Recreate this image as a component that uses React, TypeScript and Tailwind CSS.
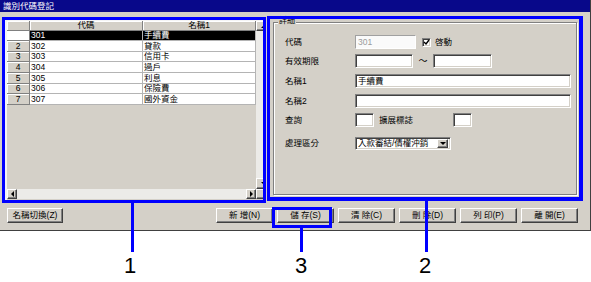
import React from "react";

const raised =
  "bg-[#d4d0c8] border border-t-white border-l-white border-r-[#404040] border-b-[#404040] shadow-[inset_-1px_-1px_0_#808080]";
const sunken =
  "bg-white border border-t-[#808080] border-l-[#808080] border-r-white border-b-white shadow-[inset_1px_1px_0_#404040,inset_-1px_-1px_0_#d4d0c8]";
const hdr =
  "bg-[#d4d0c8] border-r border-b border-[#808080] shadow-[inset_1px_1px_0_#ffffff] flex items-center justify-center";

const rows: [string, string, string][] = [
  ["301", "手續費", "h-[10px]"],
  ["302", "貸款", "h-[11px]"],
  ["303", "信用卡", "h-[10px]"],
  ["304", "過戶", "h-[11px]"],
  ["305", "利息", "h-[11px]"],
  ["306", "保險費", "h-[10px]"],
  ["307", "國外資金", "h-[11px]"],
];

function Tri({ dir }: { dir: "l" | "r" | "u" | "d" }) {
  const pts =
    dir === "l"
      ? "3,0 3,6 0,3"
      : dir === "r"
      ? "0,0 0,6 3,3"
      : dir === "u"
      ? "0,3 6,3 3,0"
      : "0,0 6,0 3,3";
  const w = dir === "l" || dir === "r" ? 3 : 6;
  const h = dir === "l" || dir === "r" ? 6 : 3;
  return (
    <svg width={w} height={h} viewBox={`0 0 ${w} ${h}`}>
      <polygon points={pts} fill="#000" />
    </svg>
  );
}

function Btn({ label, w }: { label: string; w: string }) {
  return (
    <div className={`${raised} ${w} h-[15px] flex items-center justify-center text-[8.5px] leading-none text-black whitespace-pre`}>
      {label}
    </div>
  );
}

function Label({ text, w = "w-[70px]" }: { text: string; w?: string }) {
  return <div className={`${w} shrink-0 text-[8.5px] leading-none text-black`}>{text}</div>;
}

export default function App() {
  return (
    <div className="relative w-[591px] h-[282px] bg-white overflow-hidden font-['Liberation_Sans','Noto_Sans_CJK_TC',sans-serif]">
      {/* Window */}
      <div className="w-[591px] h-[231px] bg-[#d4d0c8] border-r border-b border-[#404040] flex flex-col">
        <div className="h-[12px] bg-[#08088a] text-white text-[8.5px] leading-[12px] pl-[3px]">識別代碼登記</div>

        <div className="flex pl-[5px] pt-[7px]">
          {/* Grid */}
          <div className="w-[258px] h-[182px] border-l-2 border-t-2 border-[#f4f4f4] overflow-hidden flex shrink-0">
            <div className="w-[249px] shrink-0 flex flex-col pb-[2px]">
              <div className="flex h-[10px] text-[8.5px] leading-none">
                <div className={`${hdr} w-[23px]`}></div>
                <div className={`${hdr} w-[113px]`}>代碼</div>
                <div className={`${hdr} w-[113px]`}>名稱1</div>
              </div>
              {rows.map(([code, name, h], i) => {
                const sel = i === 0;
                return (
                  <div key={code} className={`flex ${h} text-[8.5px] leading-none`}>
                    <div
                      className={
                        sel
                          ? "w-[23px] bg-white border-r border-b border-[#808080]"
                          : `${hdr} w-[23px]`
                      }
                    >
                      {sel ? "" : String(i + 1)}
                    </div>
                    <div
                      className={`w-[113px] border-r border-b border-[#b4b4b4] flex items-center pl-[1px] ${
                        sel ? "bg-black text-white" : "bg-white text-black"
                      }`}
                    >
                      {code}
                    </div>
                    <div
                      className={`w-[113px] border-r border-b border-[#b4b4b4] flex items-center pl-[1px] ${
                        sel ? "bg-black text-white" : "bg-white text-black"
                      }`}
                    >
                      {name}
                    </div>
                  </div>
                );
              })}
              <div className="flex-1 bg-[#d4d0c8]"></div>
              <div className="h-[10px] flex">
                <div className={`${raised} w-[10px] flex items-center justify-center`}>
                  <Tri dir="l" />
                </div>
                <div className="flex-1 bg-[#ecebe8]"></div>
                <div className={`${raised} w-[10px] flex items-center justify-center`}>
                  <Tri dir="r" />
                </div>
              </div>
            </div>
            <div className="w-[16px] shrink-0 flex flex-col pb-[2px]">
              <div className={`${raised} h-[10px] flex items-center justify-center`}>
                <Tri dir="u" />
              </div>
              <div className="flex-1 bg-[#ecebe8]"></div>
              <div className={`${raised} h-[11px] flex items-center justify-center`}>
                <Tri dir="d" />
              </div>
              <div className={`${raised} h-[10px]`}></div>
            </div>
          </div>

          {/* Detail group box */}
          <div className="relative ml-[10px] mt-[3px] w-[304px] h-[173px] border border-[#808080] shadow-[inset_1px_1px_0_#ffffff,1px_1px_0_#ffffff] shrink-0">
            <div className="absolute left-[4px] top-[-6px] bg-[#d4d0c8] px-[1px] text-[8px] leading-none text-black">詳細</div>
            <div className="flex flex-col pl-[11px] pt-[12px]">
              <div className="flex items-center h-[14px]">
                <Label text="代碼" />
                <div className="w-[61px] h-[14px] bg-[#fafafa] border border-t-[#a0a0a0] border-l-[#a0a0a0] border-r-white border-b-white flex items-center pl-[2px] text-[8.5px] leading-none text-[#9a9a9a]">
                  301
                </div>
                <div className={`${sunken} ml-[6px] w-[9px] h-[9px] flex items-center justify-center`}>
                  <svg width="7" height="7" viewBox="0 0 7 7">
                    <polyline points="1,3 3,5 6,1" fill="none" stroke="#000" strokeWidth="1.4" />
                  </svg>
                </div>
                <div className="ml-[4px] text-[8.5px] leading-none text-black">啓動</div>
              </div>
              <div className="flex items-center h-[14px] mt-[5px]">
                <Label text="有效期限" />
                <div className={`${sunken} w-[58px] h-[14px]`}></div>
                <div className="w-[20px] text-center text-[9px] leading-none text-black">〜</div>
                <div className={`${sunken} w-[59px] h-[14px]`}></div>
              </div>
              <div className="flex items-center h-[14px] mt-[6px]">
                <Label text="名稱1" />
                <div className={`${sunken} w-[216px] h-[14px] flex items-center pl-[2px] text-[8.5px] leading-none text-black`}>
                  手續費
                </div>
              </div>
              <div className="flex items-center h-[14px] mt-[6px]">
                <Label text="名稱2" />
                <div className={`${sunken} w-[216px] h-[14px]`}></div>
              </div>
              <div className="flex items-center h-[14px] mt-[5px]">
                <Label text="查詢" />
                <div className={`${sunken} w-[19px] h-[14px]`}></div>
                <div className="ml-[5px]">
                  <Label text="擴展標誌" w="w-[74px]" />
                </div>
                <div className={`${sunken} w-[19px] h-[14px]`}></div>
              </div>
              <div className="flex items-center h-[13px] mt-[10px]">
                <Label text="處理區分" />
                <div className={`${sunken} w-[96px] h-[13px] flex items-center pl-[2px] pr-[2px]`}>
                  <div className="flex-1 text-[8.5px] leading-none text-black whitespace-nowrap overflow-hidden">入款審結/債權沖銷</div>
                  <div className={`${raised} w-[11px] h-[9px] flex items-center justify-center`}>
                    <Tri dir="d" />
                  </div>
                </div>
              </div>
            </div>
          </div>
        </div>

        {/* Buttons */}
        <div className="flex mt-[7px] pl-[7px] pr-[12px]">
          <Btn label="名稱切換(Z)" w="w-[56px]" />
          <div className="flex-1"></div>
          <div className="flex gap-[4px]">
            <Btn label="新 增(N)" w="w-[57px]" />
            <Btn label="儲 存(S)" w="w-[57px]" />
            <Btn label="清 除(C)" w="w-[57px]" />
            <Btn label="刪 除(D)" w="w-[57px]" />
            <Btn label="列 印(P)" w="w-[57px]" />
            <Btn label="離 開(E)" w="w-[57px]" />
          </div>
        </div>
      </div>

      {/* Annotations */}
      <div className="absolute left-[2px] top-[17px] w-[264px] h-[186px] border-[3px] border-[#0000ff]"></div>
      <div className="absolute left-[267px] top-[16px] w-[316px] h-[185px] border-[3px] border-r-4 border-b-4 border-[#0000ff]"></div>
      <div className="absolute left-[272px] top-[207px] w-[60px] h-[21px] border-[3px] border-[#0000ff]"></div>
      <div className="absolute left-[131px] top-[203px] w-[3px] h-[49px] bg-[#0000ff]"></div>
      <div className="absolute left-[425px] top-[201px] w-[3px] h-[51px] bg-[#0000ff]"></div>
      <div className="absolute left-[300px] top-[228px] w-[3px] h-[24px] bg-[#0000ff]"></div>
      <div className="absolute left-[120px] top-[255px] w-[20px] text-center text-[22px] leading-[22px] text-black">1</div>
      <div className="absolute left-[415px] top-[255px] w-[20px] text-center text-[22px] leading-[22px] text-black">2</div>
      <div className="absolute left-[291px] top-[255px] w-[20px] text-center text-[22px] leading-[22px] text-black">3</div>
    </div>
  );
}
